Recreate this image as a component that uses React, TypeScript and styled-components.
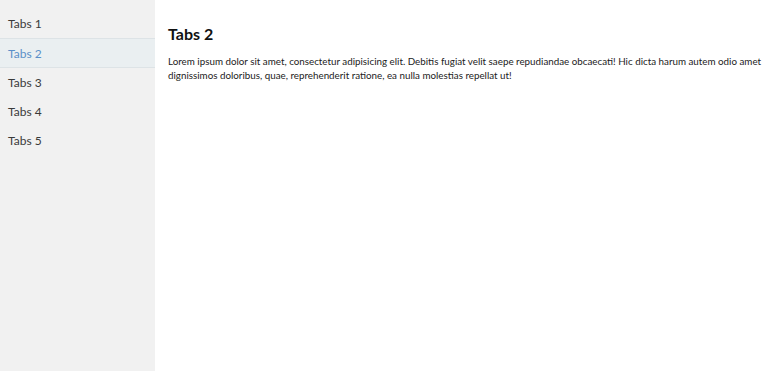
import { useState } from "react";
import styled, { createGlobalStyle } from "styled-components";

const GlobalStyle = createGlobalStyle`
    html, body {
        margin: 0;
        padding: 0;
        height: 100%;
        background: #fff;
    }
    #root {
        height: 100%;
    }
    body {
        font-family: Lato, "Open Sans", sans-serif;
        color: #222;
    }
`

const Layout = styled.div`
    display: flex;
    height: 100vh;
`

const Sidebar = styled.ul`
    width: 155px;
    flex-shrink: 0;
    margin: 0;
    padding: 9px 0 0;
    list-style: none;
    background: #f1f1f1;
`

const TabItem = styled.li<{ $active: boolean }>`
    box-sizing: border-box;
    display: flex;
    align-items: center;
    height: ${p => (p.$active ? "30px" : "29px")};
    padding: 0 8px;
    font-size: 12px;
    cursor: pointer;
    color: ${p => (p.$active ? "#5a8fc8" : "#3a3a3a")};
    background: ${p => (p.$active ? "#eaeff1" : "transparent")};
    border-top: ${p => (p.$active ? "1px solid #dde3e6" : "none")};
    border-bottom: ${p => (p.$active ? "1px solid #dde3e6" : "none")};
`

const Content = styled.div`
    flex: 1;
    padding: 24px 6px 0 13px;
`

const Title = styled.h2`
    margin: 0 0 11px;
    font-size: 16px;
    font-weight: 700;
    color: #111;
`

const Text = styled.p`
    margin: 0;
    font-size: 9.8px;
    line-height: 14px;
    color: #222;
`

const tabs = ["Tabs 1", "Tabs 2", "Tabs 3", "Tabs 4", "Tabs 5"]

export default function App() {
    const [active, setActive] = useState(1)
    return (
        <>
            <GlobalStyle />
            <Layout>
                <Sidebar>
                    {tabs.map((t, i) => (
                        <TabItem key={t} $active={i === active} onClick={() => setActive(i)}>
                            {t}
                        </TabItem>
                    ))}
                </Sidebar>
                <Content>
                    <Title>{tabs[active]}</Title>
                    <Text>
                        Lorem ipsum dolor sit amet, consectetur adipisicing elit. Debitis fugiat velit saepe repudiandae obcaecati! Hic dicta harum autem odio amet dignissimos doloribus, quae, reprehenderit ratione, ea nulla molestias repellat ut!
                    </Text>
                </Content>
            </Layout>
        </>
    )
}
